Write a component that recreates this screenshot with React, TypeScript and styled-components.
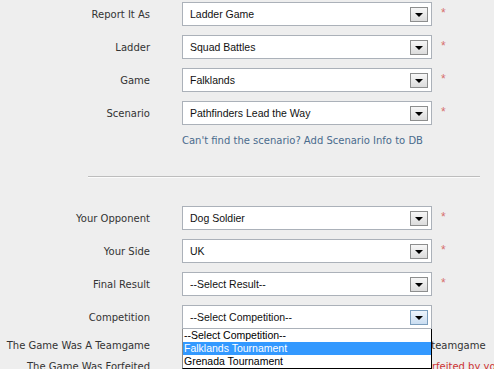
import React from "react";
import styled, { createGlobalStyle } from "styled-components";

const GlobalStyle = createGlobalStyle`
  body {
    margin: 0;
    background: #eeeeee;
    font-family: "DejaVu Sans", Verdana, sans-serif;
    overflow: hidden;
  }
`;

const Page = styled.div`
  width: 494px;
  height: 369px;
  padding-top: 2px;
  box-sizing: border-box;
  overflow: hidden;
`;

const Section = styled.div`
  display: flex;
  flex-direction: column;
  gap: 9px;
`;

const Row = styled.div`
  display: flex;
  align-items: center;
  height: 24px;
`;

const Label = styled.div`
  flex-shrink: 0;
  width: 150px;
  margin-right: 32px;
  text-align: right;
  font-size: 10px;
  color: #333333;
  white-space: nowrap;
`;

const SelectWrap = styled.div`
  position: relative;
  flex-shrink: 0;
  width: 250px;
  height: 24px;
`;

const SelectBox = styled.div`
  box-sizing: border-box;
  width: 100%;
  height: 100%;
  background: #ffffff;
  border: 1px solid #abb1b9;
  display: flex;
  align-items: center;
  justify-content: space-between;
  padding: 0 3px 0 7px;
  font-family: "Liberation Sans", Arial, sans-serif;
  font-size: 10.5px;
  color: #111111;
`;

const ArrowButton = styled.div<{ $hover?: boolean }>`
  box-sizing: border-box;
  width: 18px;
  height: 15px;
  border: 1px solid ${({ $hover }) => ($hover ? "#7b9ebd" : "#8d8e8e")};
  background: ${({ $hover }) =>
    $hover
      ? "linear-gradient(#eef5fc, #c9ddf1)"
      : "linear-gradient(#f7f7f7, #dcdcdc)"};
  display: flex;
  justify-content: center;
  align-items: flex-end;
  padding-bottom: 4px;
`;

const Triangle = styled.div`
  width: 0;
  height: 0;
  border-left: 4px solid transparent;
  border-right: 4px solid transparent;
  border-top: 4px solid #000000;
`;

const Required = styled.span`
  align-self: flex-start;
  margin: 4px 0 0 9px;
  color: #d66f6f;
  font-family: "Liberation Sans", Arial, sans-serif;
  font-size: 12px;
`;

const HelpLink = styled.a`
  display: block;
  margin: 9px 0 0 182px;
  font-size: 10px;
  line-height: 14px;
  color: #4a6b8d;
  text-decoration: none;
  cursor: pointer;
`;

const Divider = styled.hr`
  margin: 28px 14px 28px 88px;
  height: 0;
  border: none;
  border-top: 1px solid #bdbdbd;
  border-bottom: 1px solid #fbfbfb;
`;

const CheckRow = styled.div<{ $first?: boolean }>`
  display: flex;
  align-items: center;
  height: 16px;
  margin-top: ${({ $first }) => ($first ? "8px" : "5px")};
`;

const CheckText = styled.span<{ $warn?: boolean }>`
  font-size: 10px;
  color: ${({ $warn }) => ($warn ? "#cc3333" : "#333333")};
  white-space: nowrap;
`;

const CheckBox = styled.input`
  flex-shrink: 0;
  margin: 0 4px 0 0;
  width: 13px;
  height: 13px;
`;

const DropList = styled.ul`
  position: absolute;
  top: 100%;
  left: 0;
  z-index: 5;
  box-sizing: border-box;
  width: 250px;
  margin: 0;
  padding: 0;
  list-style: none;
  background: #ffffff;
  border: 1px solid #000000;
  border-top: none;
  border-left-color: #8a8a8a;
  font-family: "Liberation Sans", Arial, sans-serif;
  font-size: 10.5px;
`;

const DropItem = styled.li<{ $active?: boolean }>`
  height: 13px;
  line-height: 13px;
  padding-left: 1px;
  background: ${({ $active }) => ($active ? "#3399ff" : "#ffffff")};
  color: ${({ $active }) => ($active ? "#ffffff" : "#000000")};
  white-space: nowrap;
`;

interface Field {
  label: string;
  value: string;
  required?: boolean;
}

const topFields: Field[] = [
  { label: "Report It As", value: "Ladder Game", required: true },
  { label: "Ladder", value: "Squad Battles", required: true },
  { label: "Game", value: "Falklands", required: true },
  { label: "Scenario", value: "Pathfinders Lead the Way", required: true },
];

const bottomFields: Field[] = [
  { label: "Your Opponent", value: "Dog Soldier", required: true },
  { label: "Your Side", value: "UK", required: true },
  { label: "Final Result", value: "--Select Result--", required: true },
];

const competitions = ["--Select Competition--", "Falklands Tournament", "Grenada Tournament"];

const Select: React.FC<{ value: string; hover?: boolean }> = ({ value, hover }) => (
  <SelectBox>
    <span>{value}</span>
    <ArrowButton $hover={hover}>
      <Triangle />
    </ArrowButton>
  </SelectBox>
);

const FieldRow: React.FC<{ field: Field }> = ({ field }) => (
  <Row>
    <Label>{field.label}</Label>
    <SelectWrap>
      <Select value={field.value} />
    </SelectWrap>
    {field.required && <Required>*</Required>}
  </Row>
);

export default function App() {
  return (
    <Page>
      <GlobalStyle />
      <Section>
        {topFields.map((f) => (
          <FieldRow key={f.label} field={f} />
        ))}
      </Section>
      <HelpLink>Can't find the scenario? Add Scenario Info to DB</HelpLink>
      <Divider />
      <Section>
        {bottomFields.map((f) => (
          <FieldRow key={f.label} field={f} />
        ))}
        <Row>
          <Label>Competition</Label>
          <SelectWrap>
            <Select value="--Select Competition--" hover />
            <DropList>
              {competitions.map((c, i) => (
                <DropItem key={c} $active={i === 1}>
                  {c}
                </DropItem>
              ))}
            </DropList>
          </SelectWrap>
        </Row>
      </Section>
      <CheckRow $first>
        <Label>The Game Was A Teamgame</Label>
        <CheckBox type="checkbox" />
        <CheckText>Tick this box when this game was played as a teamgame</CheckText>
      </CheckRow>
      <CheckRow>
        <Label>The Game Was Forfeited</Label>
        <CheckBox type="checkbox" />
        <CheckText $warn>Check this box when the game was actually forfeited by your opponent</CheckText>
      </CheckRow>
    </Page>
  );
}
